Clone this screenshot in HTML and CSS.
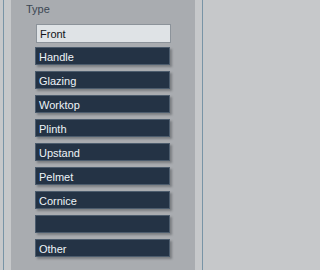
FILE: index.html
```html
<!DOCTYPE html>
<html>
<head>
<meta charset="utf-8">
<link rel="stylesheet" href="styles.css">
</head>
<body>
<div class="frame">
  <div class="panel">
    <div class="label">Type</div>
    <div class="list">
      <div class="item selected">Front</div>
      <div class="item">Handle</div>
      <div class="item">Glazing</div>
      <div class="item">Worktop</div>
      <div class="item">Plinth</div>
      <div class="item">Upstand</div>
      <div class="item">Pelmet</div>
      <div class="item">Cornice</div>
      <div class="item"></div>
      <div class="item">Other</div>
    </div>
  </div>
</div>
</body>
</html>
```

FILE: styles.css
```css
html, body {
  margin: 0;
  padding: 0;
  width: 206px;
  height: 270px;
  overflow: hidden;
  background: #c6c8ca;
  font-family: "Liberation Sans", Arial, sans-serif;
  font-size: 11px;
}

.frame {
  margin-left: 3px;
  width: 184px;
  height: 270px;
  padding: 0 7px;
  border-left: 1px solid #7894a6;
  border-right: 1px solid #7894a6;
}

.panel {
  width: 184px;
  height: 270px;
  background: #a9acb0;
  padding-top: 3px;
  box-sizing: border-box;
}

.label {
  padding-left: 15px;
  line-height: 13px;
  height: 13px;
  color: #3b4753;
}

.list {
  display: flex;
  flex-direction: column;
  margin-top: 8px;
  padding-left: 24px;
}

.item {
  box-sizing: border-box;
  width: 135px;
  height: 18px;
  margin-bottom: 6px;
  padding: 2px 3px 0;
  line-height: 15px;
  background: #243345;
  border: 1px solid #4c5c6d;
  color: #eef3f8;
  box-shadow: 2px 2px 2px rgba(40, 44, 50, 0.35);
  white-space: nowrap;
}

.item.selected {
  margin-left: 1px;
  height: 19px;
  margin-bottom: 4px;
  background: #dfe3e6;
  border-color: #8c939a;
  color: #111418;
  box-shadow: none;
}
```
